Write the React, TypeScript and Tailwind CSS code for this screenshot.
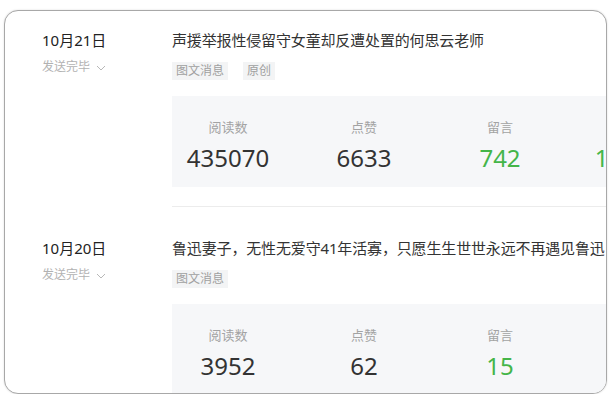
import React from "react";

type Stat = { label: string; value: string; green?: boolean };

type Item = {
  date: string;
  title: string;
  tags: string[];
  stats: Stat[];
};

const items: Item[] = [
  {
    date: "10月21日",
    title: "声援举报性侵留守女童却反遭处置的何思云老师",
    tags: ["图文消息", "原创"],
    stats: [
      { label: "阅读数", value: "435070" },
      { label: "点赞", value: "6633" },
      { label: "留言", value: "742", green: true },
      { label: "分享", value: "128064", green: true },
    ],
  },
  {
    date: "10月20日",
    title: "鲁迅妻子，无性无爱守41年活寡，只愿生生世世永远不再遇见鲁迅",
    tags: ["图文消息"],
    stats: [
      { label: "阅读数", value: "3952" },
      { label: "点赞", value: "62" },
      { label: "留言", value: "15", green: true },
      { label: "分享", value: "8", green: true },
    ],
  },
];

function Chevron() {
  return (
    <svg width="10" height="6" viewBox="0 0 10 6" className="ml-[6px] mt-[1px]">
      <polyline points="1,1 5,5 9,1" fill="none" stroke="#b8b8b8" strokeWidth="1" />
    </svg>
  );
}

function Row({ item, first }: { item: Item; first?: boolean }) {
  return (
    <div className={`flex ${first ? "pt-[19px]" : "pt-[31px]"}`}>
      <div className="w-[167px] shrink-0 pl-[37px]">
        <div className="text-[15px] leading-[20px] text-[#222]">{item.date}</div>
        <div className="mt-[8px] flex items-center text-[12px] leading-[18px] text-[#b2b2b2]">
          发送完毕
          <Chevron />
        </div>
      </div>
      <div className="min-w-0 flex-1 border-b border-[#ececec] pb-[19px]">
        <div className="whitespace-nowrap text-[15px] leading-[20px] tracking-[-0.15px] text-[#333]">
          {item.title}
        </div>
        <div className="mt-[12px] flex gap-[15px]">
          {item.tags.map((t) => (
            <span
              key={t}
              className="bg-[#f3f4f5] px-[4px] text-[12px] leading-[18px] text-[#a0a0a0]"
            >
              {t}
            </span>
          ))}
        </div>
        <div className="mt-[16px] grid w-[560px] grid-cols-[112px_112px_112px_112px] gap-x-[24px] bg-[#f6f7f9] pb-[14px] pt-[22px]">
          {item.stats.map((s) => (
            <div key={s.label} className="flex flex-col items-center">
              <div className="text-[13px] leading-[18px] text-[#a3a3a3]">{s.label}</div>
              <div
                className={`mt-[7px] whitespace-nowrap text-[24px] leading-[30px] ${
                  s.green ? "text-[#44b549]" : "text-[#333]"
                }`}
              >
                {s.value}
              </div>
            </div>
          ))}
        </div>
      </div>
    </div>
  );
}

export default function App() {
  return (
    <div
      className="h-[394px] w-[615px] overflow-hidden bg-white pl-[4px] pt-[10px]"
      style={{ fontFamily: '"Noto Sans", "Noto Sans CJK SC", sans-serif' }}
    >
      <div className="h-[384px] w-[603px] overflow-hidden rounded-[14px] border border-[#a8a8a8] bg-white shadow-[0_0_2px_rgba(0,0,0,0.15)]">
        {items.map((it, i) => (
          <Row key={it.date} item={it} first={i === 0} />
        ))}
      </div>
    </div>
  );
}
